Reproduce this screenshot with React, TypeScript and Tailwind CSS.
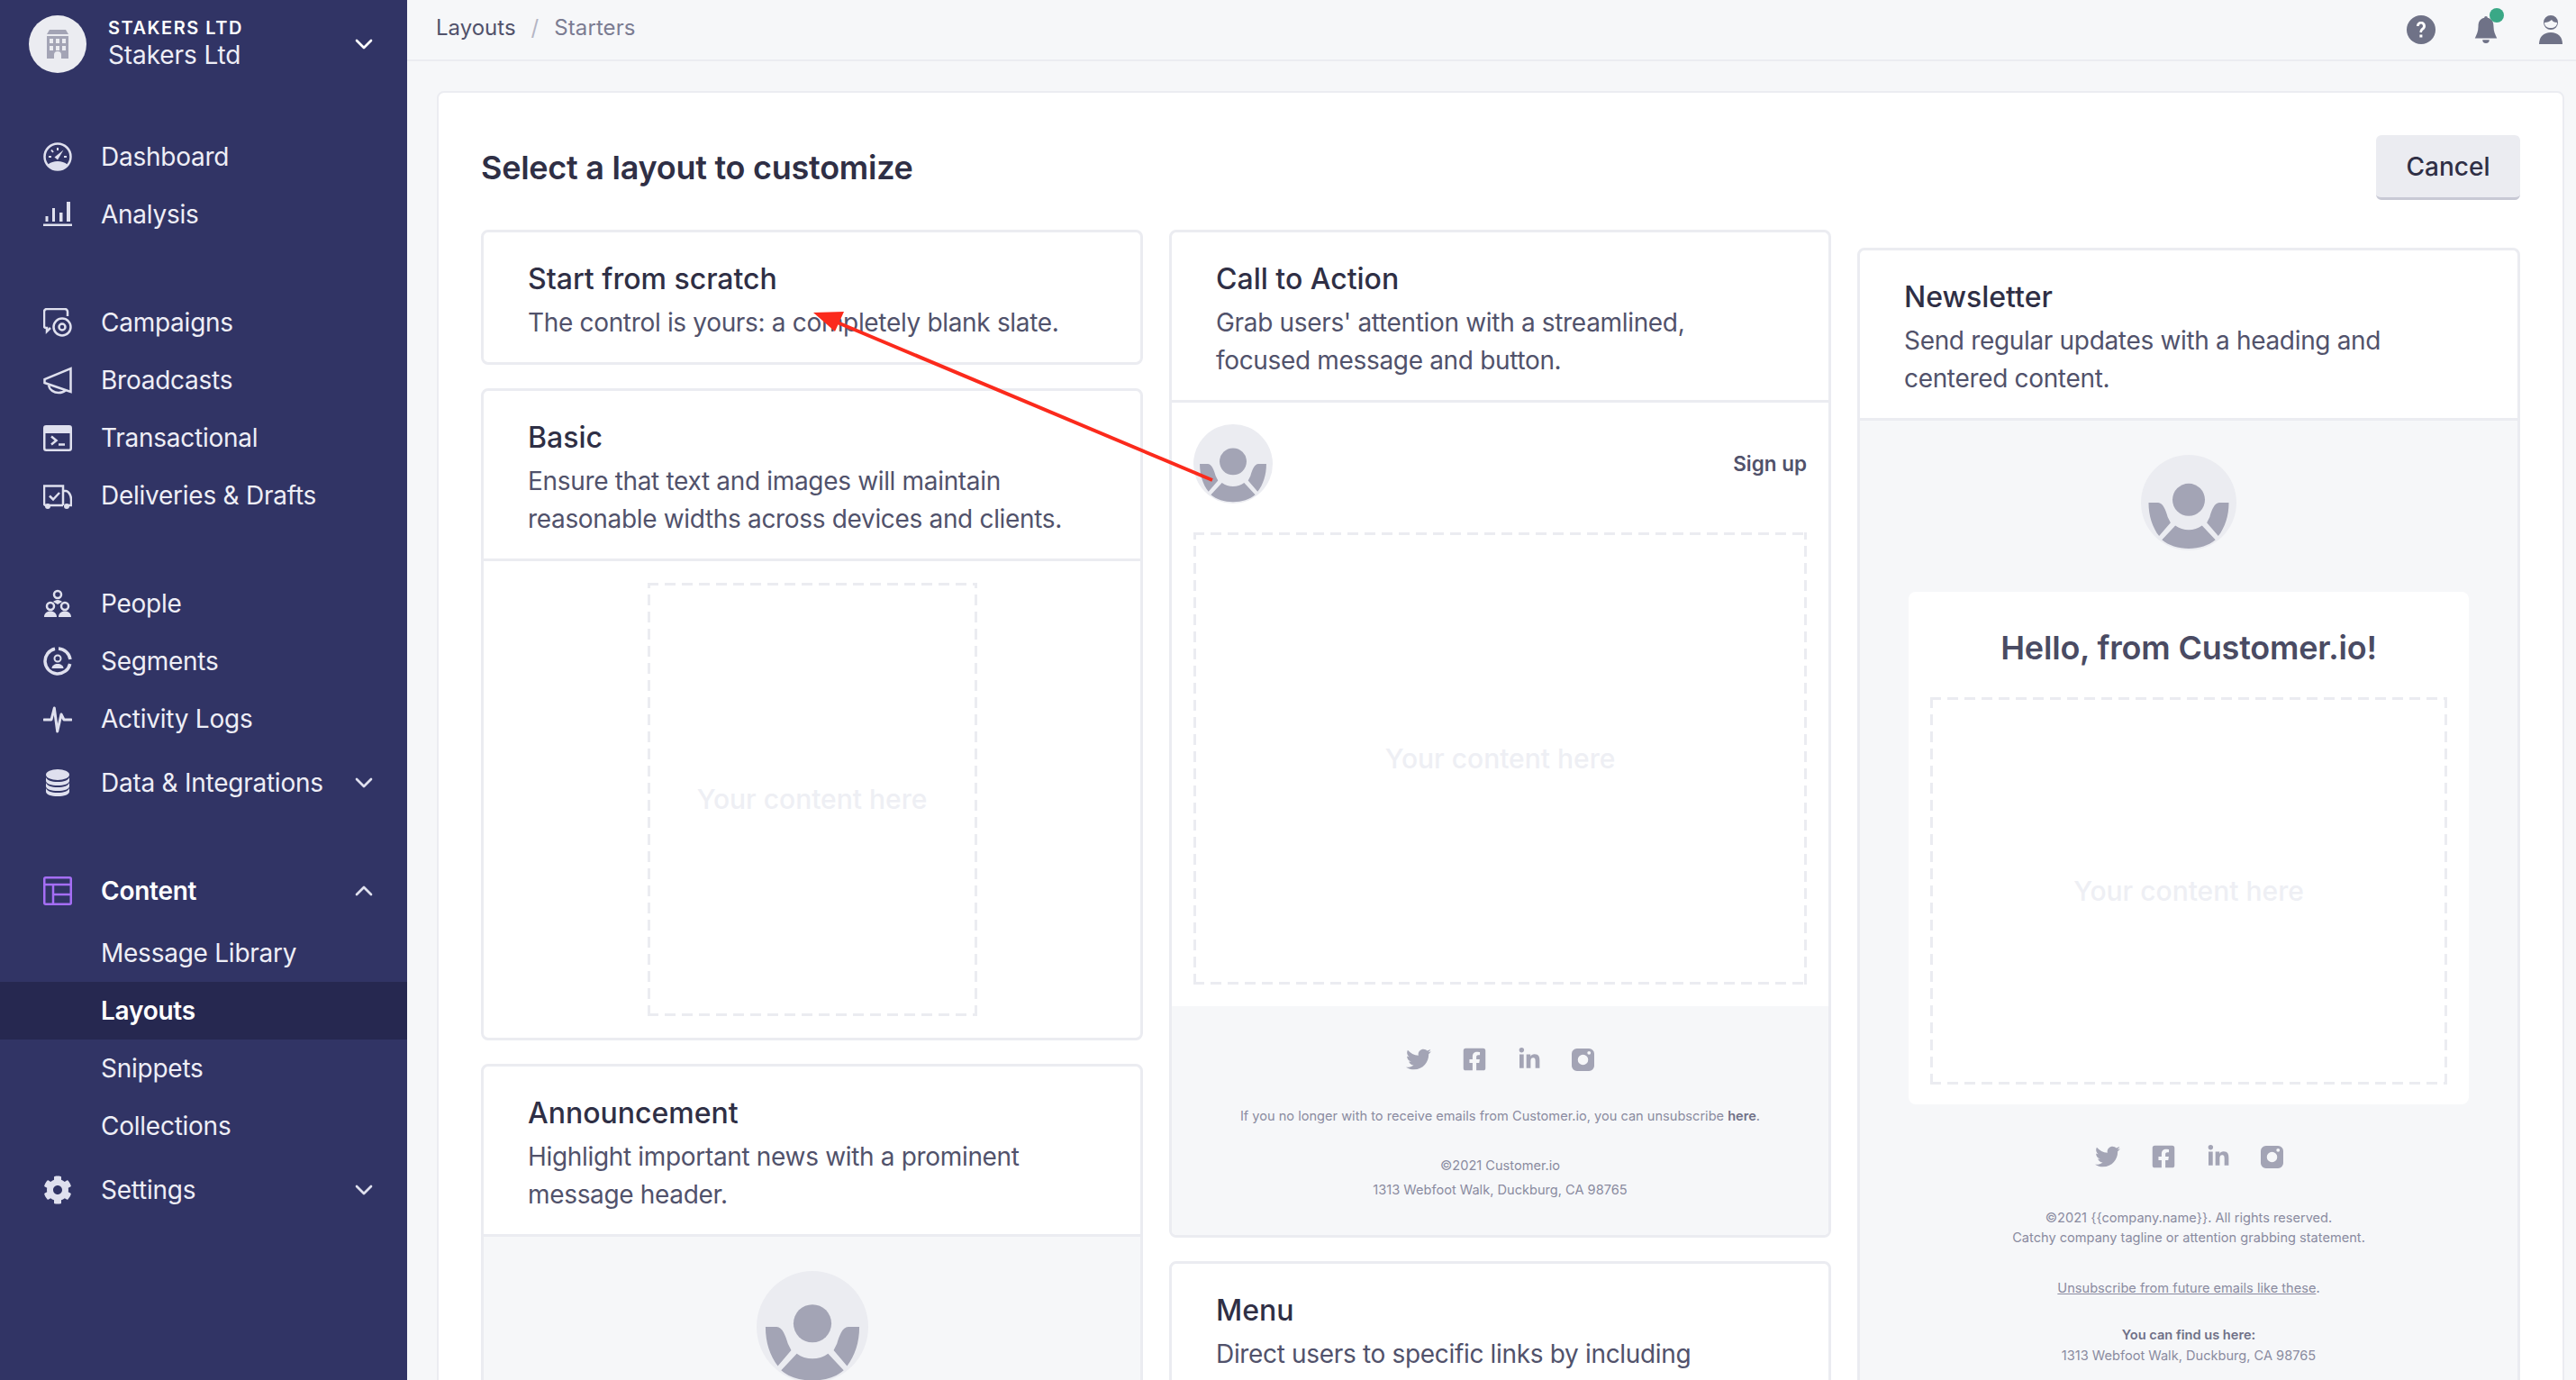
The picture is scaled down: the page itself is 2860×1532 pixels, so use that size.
import { ChevronDown, ChevronUp } from "lucide-react";
import { FaCog, FaFacebookSquare, FaLinkedinIn, FaTwitter } from "react-icons/fa";
import type { ReactNode } from "react";

const ink = "#dfe0ee";

function Glyph({ children }: { children: ReactNode }) {
  return (
    <svg width="32" height="32" viewBox="0 0 32 32" fill="none" stroke={ink} strokeWidth="2.500" className="shrink-0">
      {children}
    </svg>
  );
}

const icons: Record<string, ReactNode> = {
  dashboard: (
    <Glyph>
      <circle cx="16" cy="16" r="14.500" />
      <path d="M5 25c3-3 7-4 11-4s8 1 11 4c-3 3-7 5-11 5s-8-2-11-5z" fill={ink} stroke="none" />
      <path d="M12.500 16.500l10-8-6.500 11z" fill={ink} stroke="none" />
      <path d="M16 6v3M9 8.500l2 2.500M6 16h3M23 16h3" strokeWidth="2" />
    </Glyph>
  ),
  analysis: (
    <Glyph>
      <path d="M0 27.750h32" strokeWidth="2.500" />
      <path d="M2.500 18h3v6h-3zM10 9h3v15h-3zM18 14h3.500v10H18zM26 2h4v22h-4z" fill={ink} stroke="none" />
    </Glyph>
  ),
  campaigns: (
    <Glyph>
      <path d="M27 9V4a3 3 0 0 0-3-3H4a3 3 0 0 0-3 3v16a2 2 0 0 0 2 2h1v4l4-4" />
      <circle cx="21" cy="21" r="9.500" />
      <circle cx="21" cy="21" r="3.500" />
    </Glyph>
  ),
  broadcasts: (
    <Glyph>
      <path d="M30.500 3v26L1.500 19v-4z" />
      <path d="M6 22c1 5 6 8 11 8 3 0 6-1 8-3" />
    </Glyph>
  ),
  transactional: (
    <Glyph>
      <rect x="1.250" y="3.250" width="29.500" height="26.500" rx="2" />
      <path d="M1 5a2 2 0 0 1 2-2h26a2 2 0 0 1 2 2v6H1z" fill={ink} stroke="none" />
      <path d="M9 14.500l5.500 4.500-5.500 4.500M17 23.500h7" />
    </Glyph>
  ),
  deliveries: (
    <Glyph>
      <path d="M22 27H3a2 2 0 0 1-2-2V5.500h21V27M22 11h3c3 0 6 5 6 9v7h-4" />
      <circle cx="5" cy="28" r="3" fill={ink} stroke="none" />
      <circle cx="26" cy="28" r="3" fill={ink} stroke="none" />
      <path d="M7 16.500l4 4 7-7.500" />
    </Glyph>
  ),
  people: (
    <Glyph>
      <circle cx="16" cy="6" r="4" />
      <path d="M11 14c1-1 3-2 5-2s4 1 5 2l-5 3z" fill={ink} stroke="none" />
      <circle cx="8" cy="19" r="4" />
      <circle cx="24" cy="19" r="4" />
      <path d="M1 31c0-4 3-6.500 7-6.500s7 2.500 7 6.500zM17 31c0-4 3-6.500 7-6.500s7 2.500 7 6.500z" fill={ink} stroke="none" />
    </Glyph>
  ),
  segments: (
    <Glyph>
      <path d="M13 2.300A14 14 0 1 0 29.700 19M17 2A14 14 0 0 1 30 14" strokeWidth="3.500" />
      <circle cx="16" cy="13" r="3.500" strokeWidth="2" />
      <path d="M9.500 24c0-3 3-5 6.500-5s6.500 2 6.500 5z" fill={ink} stroke="none" />
    </Glyph>
  ),
  activity: (
    <Glyph>
      <path d="M1 17h8l3.300-13 3.400 26L20 11l3 6h8" strokeWidth="3" strokeLinejoin="round" strokeLinecap="round" />
    </Glyph>
  ),
  data: (
    <Glyph>
      <ellipse cx="16" cy="7" rx="13" ry="6" fill={ink} stroke="none" />
      <path d="M3 10c1 3 6 5 13 5s12-2 13-5v4c0 3-6 5-13 5S3 17 3 14z" fill={ink} stroke="none" />
      <path d="M3 16c1 3 6 5 13 5s12-2 13-5v4c0 3-6 5-13 5S3 23 3 20z" fill={ink} stroke="none" />
      <path d="M3 22c1 3 6 5 13 5s12-2 13-5v4c0 3-6 5-13 5S3 29 3 26z" fill={ink} stroke="none" />
    </Glyph>
  ),
  content: (
    <svg width="32" height="32" viewBox="0 0 32 32" fill="none" stroke="#a56ef5" strokeWidth="2.500" className="shrink-0">
      <rect x="1.250" y="1.250" width="29.500" height="29.500" rx="1.500" />
      <path d="M1.500 9h29M11 9v21.500M11 20h19.500" />
    </svg>
  ),
  settings: <FaCog size={32} color={ink} className="shrink-0" />,
};

function NavRow({ icon, label, chevron, bold }: { icon: string; label: string; chevron?: "up" | "down"; bold?: boolean }) {
  return (
    <div className="flex h-16 items-center pr-8 pl-12">
      {icons[icon]}
      <span className={`ml-[32px] flex-1 text-[28px] tracking-[-0.25px] ${bold ? "font-semibold text-white" : "text-[#eeeef6]"}`}>{label}</span>
      {chevron === "down" && <ChevronDown size={32} color={ink} />}
      {chevron === "up" && <ChevronUp size={32} color={ink} />}
    </div>
  );
}

function SubRow({ label, active }: { label: string; active?: boolean }) {
  return (
    <div className={`flex h-16 items-center pl-[112px] text-[28px] tracking-[-0.25px] ${active ? "bg-[#262850] font-semibold text-white" : "text-[#eeeef6]"}`}>
      {label}
    </div>
  );
}

function Sidebar() {
  return (
    <aside className="w-[452px] shrink-0 bg-[#313465]">
      <div className="flex h-[98px] items-center pr-8 pl-8">
        <div className="flex h-16 w-16 shrink-0 items-center justify-center rounded-full bg-[#ebecf1]">
          <svg width="24" height="32" viewBox="0 0 24 32" fill="#a3a4b5">
            <path d="M3 0h18l3 5H0z" />
            <path fillRule="evenodd" d="M0 7h24v25h-8v-4a4 4 0 0 0-8 0v4H0zM3 10v5h4v-5zM10 10v5h4v-5zM17 10v5h4v-5zM3 18v5h4v-5zM10 18v5h4v-5zM17 18v5h4v-5z" />
          </svg>
        </div>
        <div className="-mt-[4px] ml-[24px] flex-1 text-white">
          <div className="text-[20px] leading-[28px] font-semibold tracking-[1.5px]">STAKERS LTD</div>
          <div className="text-[28px] leading-[32px] tracking-[-0.1px] text-[#eeeef6]">Stakers Ltd</div>
        </div>
        <ChevronDown size={32} color="#ffffff" />
      </div>
      <div className="mt-[44px]">
        <NavRow icon="dashboard" label="Dashboard" />
        <NavRow icon="analysis" label="Analysis" />
      </div>
      <div className="mt-[56px]">
        <NavRow icon="campaigns" label="Campaigns" />
        <NavRow icon="broadcasts" label="Broadcasts" />
        <NavRow icon="transactional" label="Transactional" />
        <NavRow icon="deliveries" label="Deliveries & Drafts" />
      </div>
      <div className="mt-[56px]">
        <NavRow icon="people" label="People" />
        <NavRow icon="segments" label="Segments" />
        <NavRow icon="activity" label="Activity Logs" />
        <div className="mt-[7px]">
          <NavRow icon="data" label="Data & Integrations" chevron="down" />
        </div>
      </div>
      <div className="mt-[56px]">
        <NavRow icon="content" label="Content" chevron="up" bold />
        <div className="mt-[5px]">
          <SubRow label="Message Library" />
          <SubRow label="Layouts" active />
          <SubRow label="Snippets" />
          <SubRow label="Collections" />
        </div>
        <div className="mt-[7px]">
          <NavRow icon="settings" label="Settings" chevron="down" />
        </div>
      </div>
    </aside>
  );
}

function Avatar({ size }: { size: number }) {
  return (
    <svg width={size} height={size} viewBox="0 0 100 100" className="shrink-0">
      <circle cx="50" cy="50" r="50" fill="#ebecf1" />
      <g fill="#a3a4b5">
        <circle cx="50" cy="47" r="17" />
        <path d="M8 50h10c5 0 8 8 10 15l3 6-12 14C12 76 8 64 8 50z" />
        <path d="M92 50H82c-5 0-8 8-10 15l-3 6 12 14c7-9 11-21 11-35z" />
        <path d="M36 74c8 6 20 6 28 0l14 15c-7 6-17 9-28 9s-21-3-28-9z" />
      </g>
    </svg>
  );
}

function InstagramMark() {
  return (
    <svg width="25" height="25" viewBox="0 0 26 26" fill="#a3a4b5">
      <path fillRule="evenodd" d="M6 0h14a6 6 0 0 1 6 6v14a6 6 0 0 1-6 6H6a6 6 0 0 1-6-6V6a6 6 0 0 1 6-6zM13 7a6 6 0 1 0 0 12 6 6 0 0 0 0-12zM20 3a2 2 0 1 0 0 4 2 2 0 0 0 0-4z" />
    </svg>
  );
}

function Socials() {
  return (
    <div className="flex items-center justify-center gap-[34px] text-[#a3a4b5]">
      <FaTwitter size={28} />
      <FaFacebookSquare size={28} />
      <FaLinkedinIn size={26} />
      <InstagramMark />
    </div>
  );
}

function Placeholder({ className }: { className: string }) {
  return (
    <div
      className={`flex items-center justify-center [background:repeating-linear-gradient(90deg,#ebecf1_0_12px,transparent_12px_19px)_top/100%_3px_no-repeat,repeating-linear-gradient(90deg,#ebecf1_0_12px,transparent_12px_19px)_bottom/100%_3px_no-repeat,repeating-linear-gradient(0deg,#ebecf1_0_12px,transparent_12px_19px)_left/3px_100%_no-repeat,repeating-linear-gradient(0deg,#ebecf1_0_12px,transparent_12px_19px)_right/3px_100%_no-repeat] text-[30px] font-medium text-[#eeeff4] ${className}`}
    >
      Your content here
    </div>
  );
}

function Card({ title, desc, children }: { title: string; desc: ReactNode; children?: ReactNode }) {
  return (
    <div className="overflow-hidden rounded-[8px] border-[3px] border-[#ebecf1] bg-white">
      <div className="px-[49px] pt-[31px] pb-[23px]">
        <h3 className="text-[32px] leading-[42px] font-medium text-[#2f2f45]">{title}</h3>
        <p className="mt-[6px] text-[28px] leading-[42px] tracking-[-0.33px] text-[#51526b]">{desc}</p>
      </div>
      {children && <div className="border-t-[3px] border-[#ebecf1]">{children}</div>}
    </div>
  );
}

function Board() {
  return (
    <div className="mt-[33px] flex gap-[29px]">
      <div className="flex w-[735px] flex-col gap-[26px]">
        <Card title="Start from scratch" desc="The control is yours: a completely blank slate." />
        <Card title="Basic" desc={<>Ensure that text and images will maintain<br />reasonable widths across devices and clients.</>}>
          <div className="flex h-[529px] justify-center py-6">
            <Placeholder className="w-[366px]" />
          </div>
        </Card>
        <Card title="Announcement" desc={<>Highlight important news with a prominent<br />message header.</>}>
          <div className="flex h-[200px] justify-center bg-[#f6f7f9] pt-[38px]">
            <Avatar size={124} />
          </div>
        </Card>
      </div>
      <div className="flex w-[735px] flex-col gap-[26px]">
        <Card title="Call to Action" desc={<>Grab users' attention with a streamlined,<br />focused message and button.</>}>
          <div className="p-6">
            <div className="flex items-center justify-between">
              <Avatar size={88} />
              <span className="text-[22.500px] font-semibold text-[#51526b]">Sign up</span>
            </div>
            <Placeholder className="mt-[32px] h-[502px]" />
          </div>
          <div className="bg-[#f6f7f9] px-6 pt-[45px] pb-[36px] text-center text-[14.600px] text-[#8a8ba0]">
            <Socials />
            <p className="mt-[39px]">
              If you no longer with to receive emails from Customer.io, you can unsubscribe <span className="font-semibold text-[#6f7087]">here</span>.
            </p>
            <p className="mt-[30px] leading-[27px]">©2021 Customer.io</p>
            <p className="leading-[27px]">1313 Webfoot Walk, Duckburg, CA 98765</p>
          </div>
        </Card>
        <Card title="Menu" desc="Direct users to specific links by including" />
      </div>
      <div className="mt-[20px] flex w-[736px] flex-col gap-[26px]">
        <Card title="Newsletter" desc={<>Send regular updates with a heading and<br />centered content.</>}>
          <div className="bg-[#f6f7f9] px-[54px] pt-[38px] pb-[60px]">
            <div className="flex justify-center">
              <Avatar size={106} />
            </div>
            <div className="mt-[46px] rounded-[8px] bg-white px-6 pt-[35px] pb-[22px]">
              <div className="text-center text-[36px] font-semibold tracking-[-0.2px] text-[#4a4b63]">Hello, from Customer.io!</div>
              <Placeholder className="mt-[28px] h-[430px]" />
            </div>
            <div className="mt-[44px] text-center text-[14.600px] leading-[22px] text-[#8a8ba0]">
              <Socials />
              <p className="mt-[43px]">©2021 {"{{company.name}}"}. All rights reserved.</p>
              <p>Catchy company tagline or attention grabbing statement.</p>
              <p className="mt-[34px]"><span className="underline">Unsubscribe from future emails like these</span>.</p>
              <p className="mt-[30px] font-semibold text-[#6f7087]">You can find us here:</p>
              <p className="leading-[24px]">1313 Webfoot Walk, Duckburg, CA 98765</p>
            </div>
          </div>
        </Card>
      </div>
    </div>
  );
}

export default function App() {
  return (
    <div className="relative flex h-[1532px] w-[2860px] overflow-hidden bg-[#f6f7f9] font-['Inter',sans-serif]">
      <Sidebar />
      <main className="min-w-0 flex-1">
        <header className="flex h-[68px] items-center border-b-2 border-[#ebecf1] pr-[15px] pl-[32px]">
          <div className="-mt-[4px] flex flex-1 items-center text-[24px]">
            <span className="text-[#51526b]">Layouts</span>
            <span className="mx-[17px] text-[#b4b5c4]">/</span>
            <span className="tracking-[0.1px] text-[#7b7c92]">Starters</span>
          </div>
          <svg width="32" height="32" viewBox="0 0 32 32">
            <circle cx="16" cy="16" r="16" fill="#6f7287" />
            <path d="M11 12c0-3 2-5 5-5s5 2 5 5c0 4-4 4-4 7h-2.500c0-5 3.500-4.500 3.500-7 0-1.500-1-2.500-2-2.500s-2.200 1-2.400 2.500zM14.400 21.500h3v3h-3z" fill="#ffffff" />
          </svg>
          <div className="relative ml-[43px] h-[32px] w-[26px]">
            <svg width="26" height="32" viewBox="0 0 26 34" fill="#6f7287">
              <path d="M11 3a2 2 0 0 1 4 0c5 1 7 5 7 10 0 6 2 10 4 14H0c2-4 4-8 4-14 0-5 2-9 7-10zM9 29h8a4 4 0 0 1-8 0z" />
            </svg>
            <div className="absolute -top-[8px] left-[17px] h-4 w-4 rounded-full bg-[#3aa886]" />
          </div>
          <svg className="ml-[46px]" width="26" height="32" viewBox="0 0 26 32" fill="#6f7287">
            <path fillRule="evenodd" d="M13 0a8 8 0 1 1 0 16 8 8 0 0 1 0-16zM6 8c3 0 6-1 8-3 1 2 3 3 6 3 0 4-3 6-7 6s-7-2-7-6z" />
            <path d="M0 32c0-8 5-13 13-13s13 5 13 13z" />
          </svg>
        </header>
        <div className="mt-[33px] ml-[33px] h-[1500px] w-[2362px] rounded-[8px] border-2 border-[#ebecf1] bg-white px-[47px] pt-[47px]">
          <div className="flex items-center justify-between">
            <h1 className="text-[36px] font-semibold tracking-[-0.26px] text-[#2f2f45]">Select a layout to customize</h1>
            <button className="h-[72px] w-[160px] rounded-[6px] border-b-[3px] border-[#c8c9d5] bg-[#ebecf1] text-[28px] font-medium text-[#2f2f45]">
              Cancel
            </button>
          </div>
          <Board />
        </div>
      </main>
      <svg className="pointer-events-none absolute top-0 left-0" width="2860" height="1532">
        <path d="M1346 533L925 356" stroke="#fb2a1c" strokeWidth="4" />
        <path d="M903 347l34-1-10 22z" fill="#fb2a1c" />
      </svg>
    </div>
  );
}
